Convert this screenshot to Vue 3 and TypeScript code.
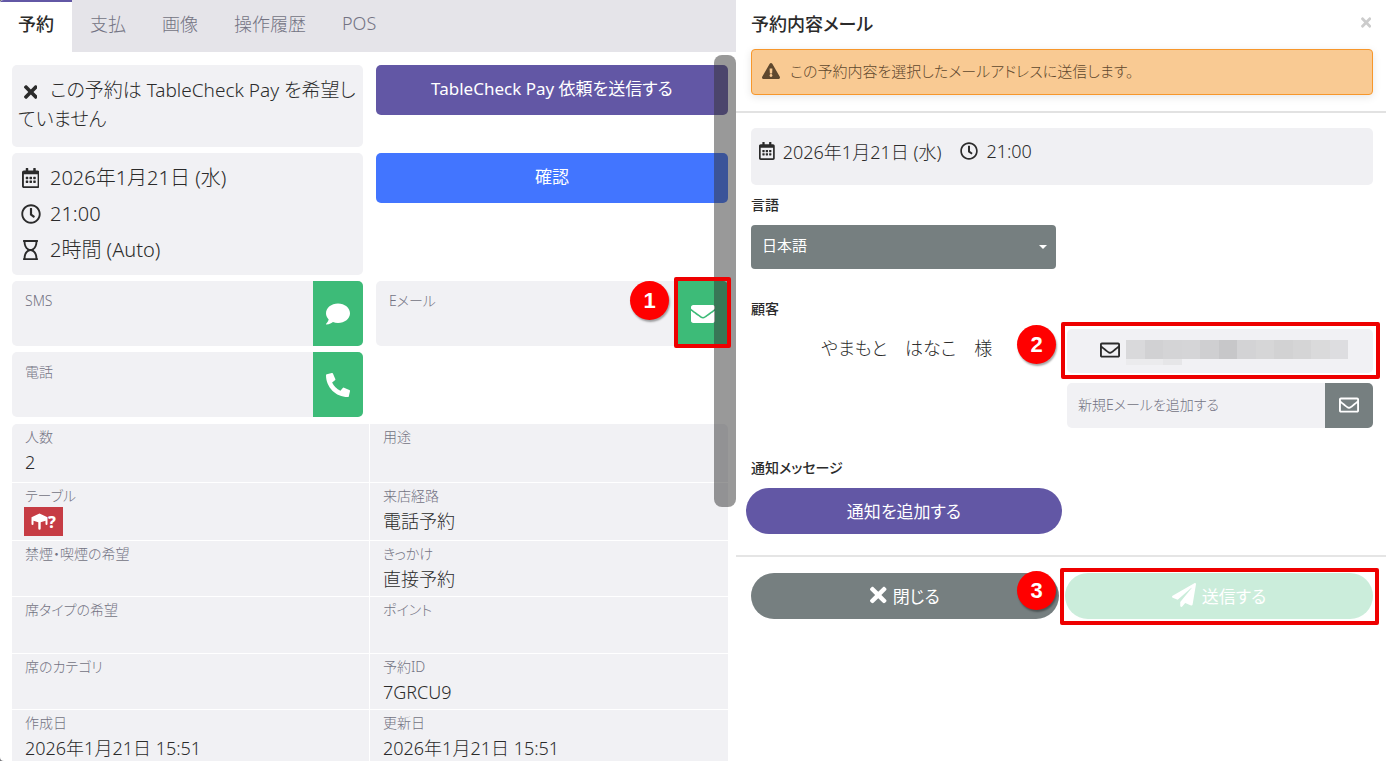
<script setup lang="ts">
import { ref } from 'vue'

interface Icon { box: string; d: string }
interface Field { label: string; value?: string; table?: boolean }

const icons: Record<string, Icon> = {
  times: { box: '0 0 352 512', d: 'M242.72 256l100.07-100.07c12.28-12.28 12.28-32.19 0-44.48l-22.24-22.24c-12.28-12.28-32.19-12.28-44.48 0L176 189.28 75.93 89.21c-12.28-12.28-32.19-12.28-44.48 0L9.21 111.45c-12.28 12.28-12.28 32.19 0 44.48L109.28 256 9.21 356.07c-12.28 12.28-12.28 32.19 0 44.48l22.24 22.24c12.28 12.28 32.2 12.28 44.48 0L176 322.72l100.07 100.07c12.28 12.28 32.2 12.28 44.48 0l22.24-22.24c12.28-12.28 12.28-32.19 0-44.48L242.72 256z' },
  calendar: { box: '0 0 448 512', d: 'M148 288h-40c-6.6 0-12-5.4-12-12v-40c0-6.6 5.4-12 12-12h40c6.6 0 12 5.4 12 12v40c0 6.6-5.4 12-12 12zm108-12v-40c0-6.6-5.4-12-12-12h-40c-6.6 0-12 5.4-12 12v40c0 6.6 5.4 12 12 12h40c6.6 0 12-5.4 12-12zm96 0v-40c0-6.6-5.4-12-12-12h-40c-6.6 0-12 5.4-12 12v40c0 6.6 5.4 12 12 12h40c6.6 0 12-5.4 12-12zm-96 96v-40c0-6.6-5.4-12-12-12h-40c-6.6 0-12 5.4-12 12v40c0 6.6 5.4 12 12 12h40c6.6 0 12-5.4 12-12zm-96 0v-40c0-6.6-5.4-12-12-12h-40c-6.6 0-12 5.4-12 12v40c0 6.6 5.4 12 12 12h40c6.6 0 12-5.4 12-12zm192 0v-40c0-6.6-5.4-12-12-12h-40c-6.6 0-12 5.4-12 12v40c0 6.6 5.4 12 12 12h40c6.6 0 12-5.4 12-12zm96-260v352c0 26.5-21.5 48-48 48H48c-26.5 0-48-21.5-48-48V112c0-26.5 21.5-48 48-48h48V12c0-6.6 5.4-12 12-12h40c6.6 0 12 5.4 12 12v52h128V12c0-6.6 5.4-12 12-12h40c6.6 0 12 5.4 12 12v52h48c26.5 0 48 21.5 48 48zm-48 346V160H48v298c0 3.3 2.7 6 6 6h340c3.3 0 6-2.7 6-6z' },
  clock: { box: '0 0 512 512', d: 'M256 8C119 8 8 119 8 256s111 248 248 248 248-111 248-248S393 8 256 8zm0 448c-110.5 0-200-89.5-200-200S145.5 56 256 56s200 89.5 200 200-89.5 200-200 200zm61.8-104.4l-84.9-61.7c-3.1-2.3-4.9-5.9-4.9-9.7V116c0-6.6 5.4-12 12-12h32c6.6 0 12 5.4 12 12v141.7l66.8 48.6c5.4 3.9 6.5 11.4 2.6 16.8L334.6 349c-3.9 5.3-11.4 6.5-16.8 2.6z' },
  hourglass: { box: '0 0 384 512', d: 'M368 48h4c6.627 0 12-5.373 12-12V12c0-6.627-5.373-12-12-12H12C5.373 0 0 5.373 0 12v24c0 6.627 5.373 12 12 12h4c0 80.564 32.188 165.807 97.18 208C47.899 298.381 16 383.9 16 464h-4c-6.627 0-12 5.373-12 12v24c0 6.627 5.373 12 12 12h360c6.627 0 12-5.373 12-12v-24c0-6.627-5.373-12-12-12h-4c0-80.564-32.188-165.807-97.18-208C336.102 213.619 368 128.1 368 48zM64 48h256c0 101.62-57.307 184-128 184S64 149.621 64 48zm256 416H64c0-101.62 57.308-184 128-184s128 82.38 128 184z' },
  comment: { box: '0 0 512 512', d: 'M256 32C114.6 32 0 125.1 0 240c0 49.6 21.4 95 57 130.7C44.5 421.1 2.7 466 2.2 466.5c-2.2 2.3-2.8 5.7-1.5 8.7S4.8 480 8 480c66.3 0 116-31.8 140.6-51.4 32.7 12.3 69 19.4 107.4 19.4 141.4 0 256-93.1 256-208S397.4 32 256 32z' },
  phone: { box: '0 0 512 512', d: 'M497.39 361.8l-112-48a24 24 0 0 0-28 6.9l-49.6 60.6A370.66 370.66 0 0 1 130.6 204.11l60.6-49.6a23.94 23.94 0 0 0 6.9-28l-48-112A24.16 24.16 0 0 0 122.6.61l-104 24A24 24 0 0 0 0 48c0 256.5 207.9 464 464 464a24 24 0 0 0 23.4-18.6l24-104a24.29 24.29 0 0 0-14.01-27.6z' },
  envelope: { box: '0 0 512 512', d: 'M502.3 190.8c3.9-3.1 9.7-.2 9.7 4.7V400c0 26.5-21.5 48-48 48H48c-26.5 0-48-21.5-48-48V195.6c0-5 5.7-7.8 9.7-4.7 22.4 17.4 52.1 39.5 154.1 113.6 21.1 15.4 56.7 47.8 92.2 47.6 35.7.3 72-32.8 92.3-47.6 102-74.1 131.6-96.3 154-113.7zM256 320c23.2.4 56.6-29.2 73.4-41.4 132.7-96.3 142.8-104.7 173.4-128.7 5.8-4.5 9.2-11.5 9.2-18.9v-19c0-26.5-21.5-48-48-48H48c-26.5 0-48 21.5-48 48v19c0 7.4 3.4 14.3 9.2 18.9 30.6 23.9 40.7 32.4 173.4 128.7 16.8 12.2 50.2 41.8 73.4 41.4z' },
  envelopeOpen: { box: '0 0 512 512', d: 'M464 64H48C21.49 64 0 85.49 0 112v288c0 26.51 21.49 48 48 48h416c26.51 0 48-21.49 48-48V112c0-26.51-21.49-48-48-48zm0 48v40.805c-22.422 18.259-58.168 46.651-134.587 106.49-16.841 13.247-50.201 45.072-73.413 44.701-23.208.375-56.579-31.459-73.413-44.701C106.18 199.465 70.425 171.067 48 152.805V112h416zM48 400V214.398c22.914 18.251 55.409 43.862 104.938 82.646 21.857 17.205 60.134 55.186 103.062 54.955 42.717.231 80.509-37.199 103.053-54.947 49.528-38.783 82.032-64.401 104.947-82.653V400H48z' },
  warning: { box: '0 0 576 512', d: 'M569.517 440.013C587.975 472.007 564.806 512 527.94 512H48.054c-36.937 0-59.999-40.055-41.577-71.987L246.423 23.985c18.467-32.009 64.72-31.951 83.154 0l239.94 416.028zM288 354c-25.405 0-46 20.595-46 46s20.595 46 46 46 46-20.595 46-46-20.595-46-46-46zm-43.673-165.346l7.418 136c.347 6.364 5.609 11.346 11.982 11.346h48.546c6.373 0 11.635-4.982 11.982-11.346l7.418-136c.375-6.874-5.098-12.654-11.982-12.654h-63.383c-6.884 0-12.356 5.78-11.981 12.654z' },
  plane: { box: '0 0 512 512', d: 'M476 3.2L12.5 270.6c-18.1 10.4-15.8 35.6 2.2 43.2L121 358.4l287.3-253.2c5.5-4.9 13.3 2.6 8.6 8.3L176 407v80.5c0 23.6 28.5 32.9 42.5 15.8L282 426l124.6 52.2c14.2 6 30.4-2.9 33-18.2l72-432C515 7.8 493.3-6.8 476 3.2z' },
}

const tabs = ['予約', '支払', '画像', '操作履歴', 'POS']
const activeTab = ref('予約')
const language = ref('ja')
const newEmail = ref('')

const fields: Field[] = [
  { label: '人数', value: '2' },
  { label: '用途' },
  { label: 'テーブル', table: true },
  { label: '来店経路', value: '電話予約' },
  { label: '禁煙・喫煙の希望' },
  { label: 'きっかけ', value: '直接予約' },
  { label: '席タイプの希望' },
  { label: 'ポイント' },
  { label: '席のカテゴリ' },
  { label: '予約ID', value: '7GRCU9' },
  { label: '作成日', value: '2026年1月21日 15:51' },
  { label: '更新日', value: '2026年1月21日 15:51' },
]

const maskTop = ['#d9d9db', '#d1d1d3', '#d4d4d6', '#d5d5d7', '#cfcfd1', '#c7c7c9', '#d3d3d5', '#d6d6d7', '#d2d2d3', '#d5d5d6', '#dadadb', '#dddde0']
const maskBottom = ['#ebebed', '#ebebed', '#e6e6e8']
</script>

<template>
  <div class="screen">
    <section class="detail">
      <nav class="tabs">
        <button
          v-for="tab in tabs"
          :key="tab"
          type="button"
          class="tab"
          :class="{ active: tab === activeTab }"
          @click="activeTab = tab"
        >{{ tab }}</button>
      </nav>

      <div class="scroll-area">
        <div class="cards">
          <div class="card pay-note">
            <span class="ico-slot"><svg class="ico-20" :viewBox="icons.times.box"><path :d="icons.times.d" /></svg></span>この予約は TableCheck Pay を希望していません
          </div>
          <button type="button" class="action purple">TableCheck Pay 依頼を送信する</button>

          <div class="card when">
            <div class="when-row"><span class="ico-slot"><svg class="ico-20" :viewBox="icons.calendar.box"><path :d="icons.calendar.d" /></svg></span>2026年1月21日 (水)</div>
            <div class="when-row"><span class="ico-slot"><svg class="ico-20" :viewBox="icons.clock.box"><path :d="icons.clock.d" /></svg></span>21:00</div>
            <div class="when-row"><span class="ico-slot"><svg class="ico-20" :viewBox="icons.hourglass.box"><path :d="icons.hourglass.d" /></svg></span>2時間 (Auto)</div>
          </div>
          <button type="button" class="action blue">確認</button>

          <div class="card contact">
            <span class="caption">SMS</span>
            <button type="button" class="contact-btn" aria-label="SMS"><svg class="ico-24" :viewBox="icons.comment.box"><path :d="icons.comment.d" /></svg></button>
          </div>
          <div class="card contact">
            <span class="caption">Eメール</span>
            <div class="marked mark-mail">
              <button type="button" class="contact-btn" aria-label="Eメール"><svg class="ico-24" :viewBox="icons.envelope.box"><path :d="icons.envelope.d" /></svg></button>
              <span class="badge">1</span>
            </div>
          </div>
          <div class="card contact">
            <span class="caption">電話</span>
            <button type="button" class="contact-btn" aria-label="電話"><svg class="ico-24" :viewBox="icons.phone.box"><path :d="icons.phone.d" /></svg></button>
          </div>
        </div>

        <dl class="fields">
          <div v-for="field in fields" :key="field.label" class="field">
            <dt>{{ field.label }}</dt>
            <dd v-if="field.table">
              <span class="table-chip">
                <svg viewBox="0 0 17 17"><path d="M8.500 0.500L16.500 4.200V11q0 1-1 1t-1-1V7.800L9.700 9.300V15.500q0 1.200-1.200 1.200t-1.200-1.200V9.300L2.500 7.800V11q0 1-1 1t-1-1V4.200z" /></svg>?
              </span>
            </dd>
            <dd v-else>{{ field.value }}</dd>
          </div>
        </dl>
      </div>
      <div class="scroll-thumb"></div>
    </section>

    <section class="mail">
      <header class="mail-head">
        <div class="title-row">
          <h1>予約内容メール</h1>
          <button type="button" class="close-x" aria-label="閉じる"><svg :viewBox="icons.times.box"><path :d="icons.times.d" /></svg></button>
        </div>
        <p class="alert" role="alert"><svg :viewBox="icons.warning.box"><path :d="icons.warning.d" /></svg>この予約内容を選択したメールアドレスに送信します。</p>
      </header>

      <div class="mail-body">
        <div class="summary">
          <svg class="ico-18" :viewBox="icons.calendar.box"><path :d="icons.calendar.d" /></svg>
          <span class="summary-date">2026年1月21日 (水)</span>
          <svg class="ico-18" :viewBox="icons.clock.box"><path :d="icons.clock.d" /></svg>
          <span>21:00</span>
        </div>

        <div class="columns">
          <div class="language">
            <label class="heading" for="language">言語</label>
            <div class="select-wrap">
              <select id="language" v-model="language">
                <option value="ja">日本語</option>
                <option value="en">English</option>
              </select>
              <svg class="caret" viewBox="0 0 8 4"><path d="M0 0h8L4 4z" /></svg>
            </div>
          </div>
        </div>

        <h2 class="heading section-heading">顧客</h2>
        <div class="columns">
          <div class="customer">やまもと　はなこ　様</div>
          <div class="addresses">
            <div class="marked mark-address">
              <button type="button" class="address" aria-label="登録済みEメール">
                <svg class="ico-20" :viewBox="icons.envelopeOpen.box"><path :d="icons.envelopeOpen.d" /></svg>
                <span class="mask">
                  <span class="mask-row"><i v-for="(c, i) in maskTop" :key="i" :style="{ background: c }"></i></span>
                  <span class="mask-row short"><i v-for="(c, i) in maskBottom" :key="i" :style="{ background: c }"></i></span>
                </span>
              </button>
              <span class="badge">2</span>
            </div>
            <div class="new-address">
              <input v-model="newEmail" type="email" placeholder="新規Eメールを追加する" aria-label="新規Eメールを追加する">
              <button type="button" aria-label="追加"><svg class="ico-20" :viewBox="icons.envelopeOpen.box"><path :d="icons.envelopeOpen.d" /></svg></button>
            </div>
          </div>
        </div>

        <h2 class="heading section-heading">通知メッセージ</h2>
        <div class="columns">
          <button type="button" class="pill purple add-notice">通知を追加する</button>
        </div>
      </div>

      <footer class="mail-foot">
        <button type="button" class="pill grey"><svg class="ico-24" :viewBox="icons.times.box"><path :d="icons.times.d" /></svg>閉じる</button>
        <div class="marked mark-send">
          <button type="button" class="pill send" disabled><svg class="ico-24" :viewBox="icons.plane.box"><path :d="icons.plane.d" /></svg>送信する</button>
          <span class="badge">3</span>
        </div>
      </footer>
    </section>
  </div>
</template>

<style>
body {
  margin: 0;
  background: #77777b;
}
</style>

<style scoped>
* {
  box-sizing: border-box;
}

.screen {
  display: grid;
  grid-template-columns: 736fr 650fr;
  height: 100vh;
  overflow: hidden;
  border-radius: 4px 0 0 4px;
  background: #fff;
  color: #2b2b2b;
  font-family: "Noto Sans", "Noto Sans CJK JP", sans-serif;
  font-feature-settings: "palt";
  font-weight: 300;
}

button,
input,
select {
  margin: 0;
  padding: 0;
  border: 0;
  font: inherit;
  font-feature-settings: inherit;
  color: inherit;
}

svg {
  display: block;
  flex: none;
  fill: currentColor;
}

.ico-18 { height: 18px; }
.ico-20 { height: 20px; }
.ico-24 { height: 24px; }

.detail {
  position: relative;
  display: flex;
  flex-direction: column;
  min-width: 0;
  min-height: 0;
}

.tabs {
  display: flex;
  flex: none;
  height: 52px;
  background: #e5e4e9;
}

.tab {
  padding: 0 18px 8px;
  border-top: 2px solid transparent;
  background: none;
  color: #737383;
  font-size: 18px;
}

.tab.active {
  border-top-color: #6257a5;
  background: #fff;
  color: #2b2b2b;
  font-weight: 500;
}

.scroll-area {
  flex: 1;
  min-height: 0;
  padding: 13px 8px 0 12px;
}

.cards {
  display: grid;
  grid-template-columns: 351fr 352fr;
  gap: 6px 13px;
  align-items: start;
}

.card {
  border-radius: 5px;
  background: #f1f1f4;
}

.pay-note {
  padding: 11px 6px 13px;
  font-size: 19px;
  line-height: 29px;
}

.ico-slot {
  display: inline-flex;
  justify-content: center;
  width: 25px;
  margin-right: 7px;
  vertical-align: middle;
}

.when {
  padding: 7px 6px;
}

.when-row {
  display: flex;
  align-items: center;
  font-size: 20px;
  line-height: 36px;
}

.action {
  height: 50px;
  padding-bottom: 6px;
  border-radius: 5px;
  color: #fff;
  font-size: 17px;
  font-weight: 400;
}

.purple { background: #6257a5; }
.blue { background: #4275ff; }
.grey { background: #767f80; }

.contact {
  display: flex;
  justify-content: space-between;
  height: 65px;
}

.caption {
  padding: 10px 13px;
  color: #737383;
  font-size: 14px;
  line-height: 20px;
}

.contact-btn {
  display: flex;
  align-items: center;
  justify-content: center;
  width: 50px;
  height: 65px;
  border-radius: 0 5px 5px 0;
  background: #3dbb78;
  color: #fff;
}

.marked {
  position: relative;
}

.marked::after {
  content: "";
  position: absolute;
  z-index: 3;
  border: 4px solid #e00;
  border-radius: 2px;
  pointer-events: none;
}

.mark-mail::after { inset: -4px -3px -2px -4px; }
.mark-address::after { inset: -7px -7px -6px -6px; }
.mark-send::after { inset: -5px -6px -6px -5px; }

.badge {
  position: absolute;
  z-index: 4;
  display: flex;
  align-items: center;
  justify-content: center;
  width: 39px;
  height: 39px;
  border-radius: 50%;
  background: #f00;
  box-shadow: 1px 2px 2px rgba(0, 0, 0, 0.35);
  color: #fff;
  font-family: "Liberation Sans", sans-serif;
  font-size: 22px;
  font-weight: 700;
}

.mark-mail .badge { top: 0; right: 59px; }
.mark-address .badge { top: -4px; right: calc(100% + 11px); }
.mark-send .badge { top: -2px; right: calc(100% + 9px); }

.fields {
  display: grid;
  grid-template-columns: 357fr 358fr;
  grid-template-rows: 58px 57px 55px 56px 55px;
  gap: 1px;
  margin: 7px 0 0;
  overflow: hidden;
  border-radius: 5px 5px 0 0;
}

.field {
  min-height: 55px;
  padding: 3px 13px;
  background: #f1f1f4;
}

.field dt {
  color: #737383;
  font-size: 14px;
  line-height: 20px;
}

.field dd {
  margin: 1px 0 0;
  font-size: 18px;
  line-height: 28px;
}

.table-chip {
  display: flex;
  align-items: center;
  justify-content: center;
  width: 39px;
  height: 29px;
  margin-left: -1px;
  background: #c63c44;
  color: #fff;
  font-size: 16px;
  font-weight: 800;
}

.table-chip svg {
  width: 17px;
}

.scroll-thumb {
  position: absolute;
  z-index: 2;
  top: 55px;
  right: 0;
  width: 22px;
  height: 452px;
  border-radius: 8px;
  background: rgba(51, 51, 51, 0.5);
}

.mail {
  min-width: 0;
}

.mail-head {
  padding: 8px 13px 16px 15px;
  border-bottom: 2px solid #e2e2e2;
}

.title-row {
  display: flex;
  align-items: center;
  justify-content: space-between;
  height: 30px;
}

h1 {
  margin: 0;
  font-size: 18px;
  font-weight: 500;
}

.close-x {
  padding: 0 2px 2px;
  background: none;
  color: #ccc;
}

.close-x svg {
  height: 15px;
}

.alert {
  display: flex;
  align-items: center;
  gap: 10px;
  height: 46px;
  margin: 11px 0 0;
  padding: 0 10px 3px;
  border: 1px solid #f7972b;
  border-radius: 4px;
  background: #f9ca93;
  box-shadow: 0 2px 8px rgba(0, 0, 0, 0.1);
  color: #5f482e;
  font-size: 15px;
}

.alert svg {
  height: 16px;
}

.mail-body {
  padding: 15px 13px 21px 15px;
  border-bottom: 2px solid #e5e5e5;
}

.summary {
  display: flex;
  align-items: center;
  gap: 8px;
  height: 57px;
  padding: 0 8px 11px;
  border-radius: 5px;
  background: #f0f0f3;
  font-size: 18px;
}

.summary-date {
  margin-right: 11px;
}

.heading {
  display: block;
  margin: 0;
  font-size: 14px;
  font-weight: 500;
  line-height: 20px;
}

.language {
  padding-top: 10px;
}

.columns {
  display: grid;
  grid-template-columns: 305fr 306fr;
  gap: 11px;
}

.select-wrap {
  position: relative;
  margin-top: 10px;
}

select {
  width: 100%;
  height: 44px;
  padding: 0 30px 5px 11px;
  border-radius: 4px;
  appearance: none;
  background: #767f80;
  color: #fff;
  font-size: 15px;
  font-weight: 400;
}

.caret {
  position: absolute;
  top: 20px;
  right: 9px;
  width: 8px;
  fill: #fff;
  pointer-events: none;
}

.section-heading {
  margin: 30px 0 10px;
}

.customer {
  padding: 5px 0 0 70px;
  font-size: 18px;
  line-height: 28px;
}

.address {
  display: flex;
  align-items: center;
  gap: 6px;
  width: 100%;
  height: 44px;
  padding: 0 25px 2px 33px;
  border-radius: 5px;
  background: #f1f1f4;
}

.mask {
  flex: 1;
  padding-top: 4px;
}

.mask-row {
  display: grid;
  grid-template-columns: repeat(12, 1fr);
  height: 19px;
}

.mask-row.short {
  height: 6px;
}

.new-address {
  display: flex;
  height: 45px;
  margin-top: 10px;
  overflow: hidden;
  border-radius: 5px;
}

.new-address input {
  flex: 1;
  min-width: 0;
  padding: 0 11px 3px;
  outline: none;
  background: #f1f1f4;
  font-size: 14px;
}

.new-address input::placeholder {
  color: #737383;
  opacity: 1;
}

.new-address button {
  display: flex;
  align-items: center;
  justify-content: center;
  width: 48px;
  padding-bottom: 2px;
  background: #767f80;
  color: #fff;
}

.pill {
  display: flex;
  align-items: center;
  justify-content: center;
  gap: 6px;
  width: 100%;
  height: 46px;
  padding-bottom: 2px;
  border-radius: 23px;
  color: #fff;
  font-size: 17px;
  font-weight: 400;
}

.add-notice {
  width: calc(100% + 11px);
  margin-left: -5px;
}

.mail-foot {
  display: grid;
  grid-template-columns: 1fr 1fr;
  gap: 6px;
  padding: 16px 13px 0 15px;
}

.send {
  background: #cbeddb;
}
</style>
